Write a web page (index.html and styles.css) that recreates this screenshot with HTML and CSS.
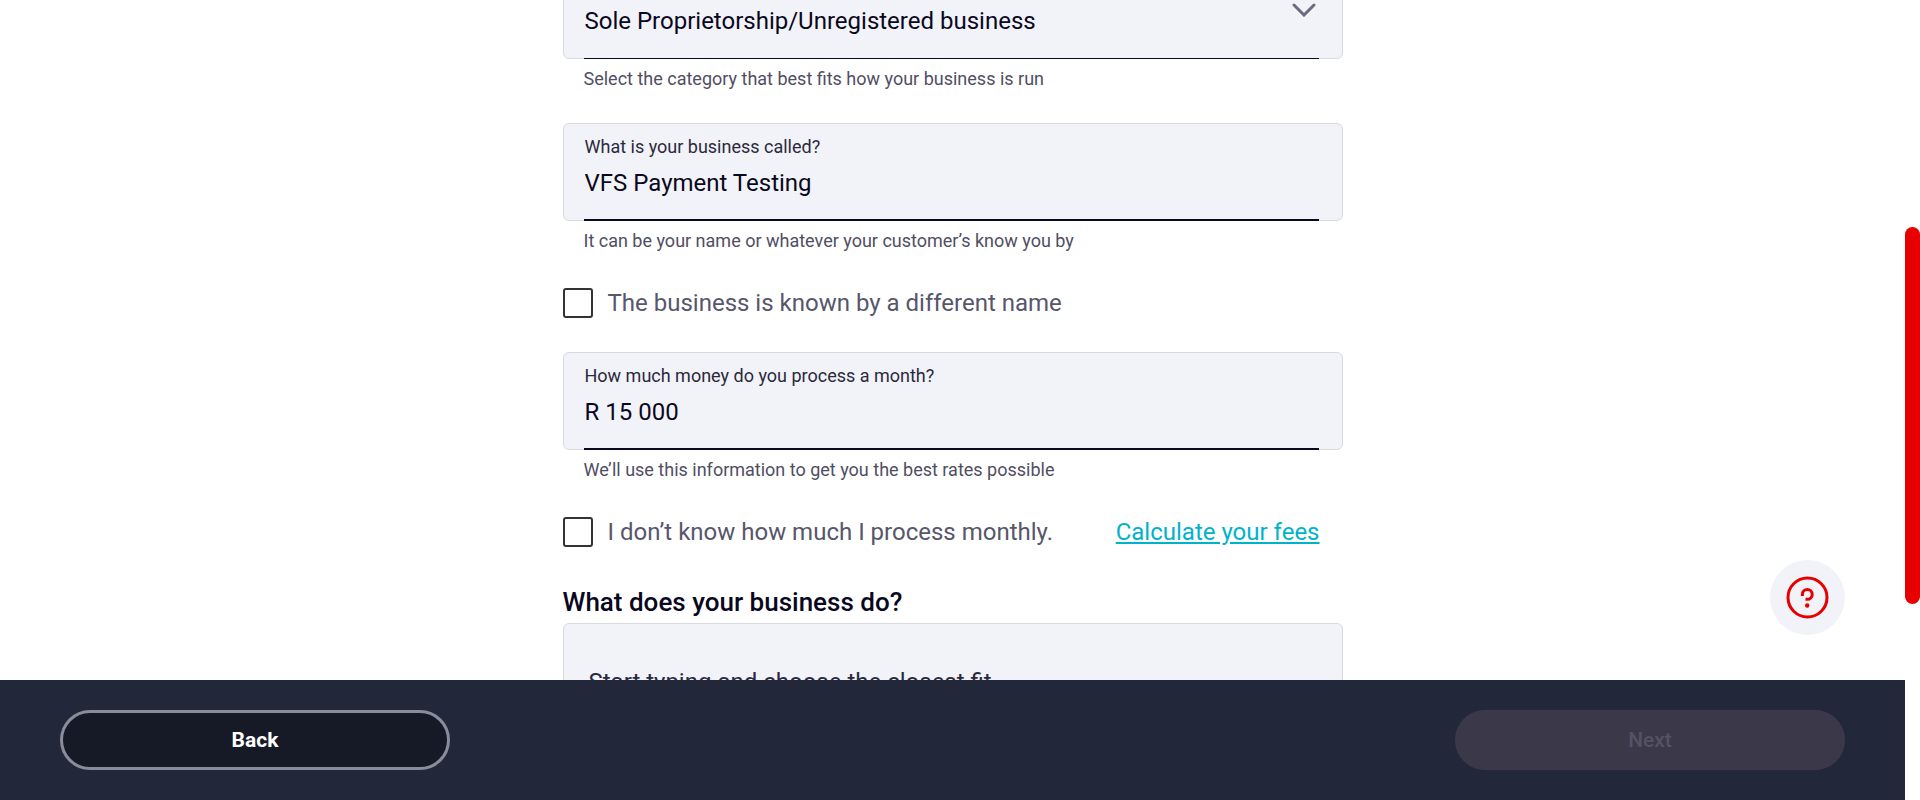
FILE: index.html
```html
<!DOCTYPE html>
<html lang="en">
<head>
  <meta charset="utf-8">
  <title>Business details</title>
  <link rel="stylesheet" href="styles.css">
</head>
<body>
  <div class="page">
    <main class="content">
      <form class="form" id="business-form">
        <div class="group">
          <div class="field field-select">
            <select class="control" aria-label="Business category">
              <option>Sole Proprietorship/Unregistered business</option>
            </select>
            <svg class="chevron" viewBox="0 0 24 14" aria-hidden="true"><path d="M2 2 12 12 22 2"/></svg>
          </div>
          <p class="hint">Select the category that best fits how your business is run</p>
        </div>

        <div class="group">
          <div class="field">
            <label class="label" for="business-name">What is your business called?</label>
            <input class="control" id="business-name" type="text" value="VFS Payment Testing">
          </div>
          <p class="hint">It can be your name or whatever your customer’s know you by</p>
        </div>

        <div class="check-row">
          <label class="check"><input class="box" type="checkbox">The business is known by a different name</label>
        </div>

        <div class="group">
          <div class="field">
            <label class="label" for="turnover">How much money do you process a month?</label>
            <input class="control" id="turnover" type="text" value="R 15 000">
          </div>
          <p class="hint">We’ll use this information to get you the best rates possible</p>
        </div>

        <div class="check-row">
          <label class="check"><input class="box" type="checkbox">I don’t know how much I process monthly.</label>
          <a class="fees" href="#fees">Calculate your fees</a>
        </div>

        <label class="heading" for="activity">What does your business do?</label>
        <div class="field field-search">
          <input class="control" id="activity" type="text" placeholder="Start typing and choose the closest fit">
        </div>
      </form>

      <button class="help" type="button" aria-label="Help">
        <svg class="help-icon" viewBox="0 0 43 43" aria-hidden="true">
          <circle class="stroke" cx="21.5" cy="21.5" r="19.500"/>
          <path class="stroke" d="M16.400 20V18.400a4.900 4.900 0 1 1 4.900 4.900h-1.800"/>
          <circle class="dot" cx="21.200" cy="29.500" r="2.200"/>
        </svg>
      </button>
    </main>

    <footer class="footer">
      <button class="button back" type="button">Back</button>
      <button class="button next" type="submit" form="business-form" disabled>Next</button>
    </footer>

    <div class="track"><div class="thumb"></div></div>
  </div>
</body>
</html>
```
FILE: styles.css
```css
* {
  box-sizing: border-box;
}

body {
  margin: 0;
  background: #fff;
  color: #0a0821;
  font-family: Roboto, "Liberation Sans", sans-serif;
}

.page {
  display: grid;
  grid-template-columns: minmax(0, 1fr) 15px;
  grid-template-rows: minmax(0, 1fr) auto;
  height: 100vh;
}

.content {
  position: relative;
  overflow: hidden;
}

/* The form is shown part-way through its scroll range */
.form {
  max-width: 780px;
  margin: -39px auto 0;
}

.group {
  margin-bottom: 33px;
}

.field {
  position: relative;
  display: flex;
  flex-direction: column;
  gap: 11px;
  padding: 12px 23px 0 20px;
  border: 1px solid #d9dae0;
  border-radius: 6px;
  background: #f2f3f8;
}

.field-select {
  padding-top: 45px;
}

.field-search {
  padding: 44px 23px 0 24px;
}

.label {
  padding-left: 1px;
  color: #2b293d;
  font-size: 18px;
  line-height: 22px;
}

.control {
  appearance: none;
  width: 100%;
  height: 52px;
  margin: 0 0 -1px;
  padding: 0 0 22px 1px;
  border: 0 solid #0a0821;
  border-bottom-width: 2px;
  border-radius: 0;
  outline: 0;
  background: transparent;
  color: #0a0821;
  font-family: inherit;
  font-size: 24px;
  line-height: 28px;
}

.field-select .control {
  padding-bottom: 23px;
  border-bottom-width: 1px;
}

.control::placeholder {
  color: #2b293d;
  opacity: 1;
}

.chevron {
  position: absolute;
  top: 41px;
  right: 26px;
  width: 24px;
  height: 14px;
  fill: none;
  stroke: #6c6b7f;
  stroke-width: 3;
  stroke-linecap: round;
  pointer-events: none;
}

.hint {
  margin: 9px 0 0;
  padding-left: 21px;
  color: #504e62;
  font-size: 18px;
  line-height: 22px;
}

.check-row {
  display: flex;
  justify-content: space-between;
  align-items: center;
  margin-bottom: 34px;
  padding: 3px 23px 0 0;
  font-size: 24px;
  line-height: 30px;
}

.check {
  display: flex;
  align-items: center;
  gap: 15px;
  color: #57566b;
}

.box {
  appearance: none;
  flex: none;
  width: 30px;
  height: 30px;
  margin: 0;
  border: 2px solid #333;
  border-radius: 3px;
  background: #fff;
}

.fees {
  color: #00b3ca;
  text-decoration: underline;
}

.heading {
  display: block;
  margin: 40px 0 6px;
  font-size: 26px;
  font-weight: 500;
  line-height: 30px;
}

.help {
  position: absolute;
  right: 60px;
  bottom: 45px;
  display: grid;
  place-items: center;
  width: 75px;
  height: 75px;
  padding: 0;
  border: 0;
  border-radius: 50%;
  background: #f2f3f8;
}

.help-icon {
  width: 43px;
  height: 43px;
}

.help-icon .stroke {
  fill: none;
  stroke: #e60000;
  stroke-width: 3;
}

.help-icon .dot {
  fill: #e60000;
}

.footer {
  display: flex;
  justify-content: space-between;
  padding: 30px 60px;
  background: #23273a;
}

.button {
  width: 390px;
  height: 60px;
  border: 3px solid transparent;
  border-radius: 30px;
  font-family: inherit;
  font-size: 21px;
  font-weight: 700;
  line-height: 24px;
}

.back {
  border-color: #8a8c9c;
  background: #161926;
  color: #fff;
}

.next {
  border-color: #3b3949;
  background: #3b3949;
  color: #545267;
  font-weight: 500;
}

.track {
  grid-column: 2;
  grid-row: 1 / 3;
  display: grid;
  grid-template-rows: 227fr 377fr 196fr;
}

.thumb {
  grid-row: 2;
  border-radius: 8px;
  background: #e60000;
}
```
